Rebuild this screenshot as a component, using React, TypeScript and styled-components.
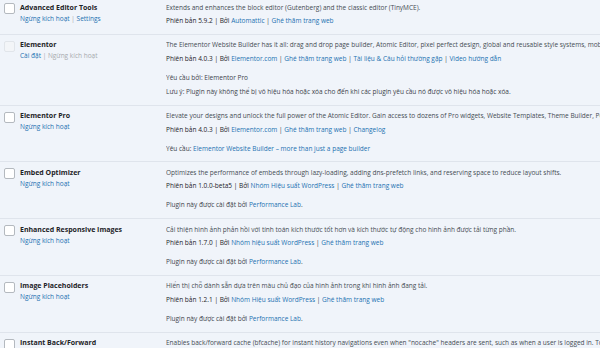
import React from "react";
import styled, { createGlobalStyle } from "styled-components";

// Style

const GlobalStyle = createGlobalStyle`
  html, body {
    margin: 0;
    padding: 0;
    background: #f0f4fa;
    overflow: hidden;
  }
  body {
    font-family: "Open Sans", "Noto Sans", sans-serif;
    font-size: 6.5px;
    color: #3c434a;
  }
`;

const Table = styled.div`
  width: 600px;
  margin-top: -3px;
  background: #f0f4fa;
`;

const Row = styled.div`
  display: grid;
  grid-template-columns: 20px 146px 1fr;
  padding: 5.5px 0 7.8px;
  border-bottom: 1px solid #dfe4ec;
`;

const CheckCell = styled.div`
  padding-left: 4px;
  padding-top: 0.5px;
`;

const Checkbox = styled.span<{ $disabled?: boolean }>`
  display: block;
  width: 9px;
  height: 9px;
  border: 1px solid ${(p) => (p.$disabled ? "#e1e5ea" : "#b4b9bf")};
  border-radius: 2px;
  background: ${(p) => (p.$disabled ? "#f3f5f8" : "#ffffff")};
`;

const NameCell = styled.div`
  display: flex;
  flex-direction: column;
`;

const Name = styled.strong`
  font-size: 7px;
  line-height: 10px;
  font-weight: 700;
  color: #1d2327;
  margin-bottom: 1px;
  white-space: nowrap;
`;

const Actions = styled.div`
  line-height: 10px;
  color: #a7aaad;
`;

const DescCell = styled.div`
  white-space: nowrap;
  overflow: hidden;
  line-height: 10px;
`;

const Desc = styled.p`
  margin: 0 0 3.5px;
  color: #454c53;
`;

const Meta = styled.div`
  color: #1d2327;
`;

const Note = styled.p<{ $first?: boolean }>`
  margin: ${(p) => (p.$first ? "9px" : "4px")} 0 0;
  color: #3c434a;
`;

const Link = styled.a`
  color: #2271b1;
  text-decoration: none;
`;

const Muted = styled.span`
  color: #a7aaad;
`;

const Sep = styled.span`
  color: #3c434a;
`;

// data

type Action = { label: string; off?: boolean };

type Plugin = {
  name: string;
  actions: Action[];
  desc: string;
  version: string;
  author: string;
  links: string[];
  notes?: React.ReactNode[];
  disabled?: boolean;
};

const installedBy = (
  <>
    Plugin này được cài đặt bởi <Link href="#">Performance Lab</Link>.
  </>
);

const plugins: Plugin[] = [
  {
    name: "Advanced Editor Tools",
    actions: [{ label: "Ngừng kích hoạt" }, { label: "Settings" }],
    desc: "Extends and enhances the block editor (Gutenberg) and the classic editor (TinyMCE).",
    version: "5.9.2",
    author: "Automattic",
    links: ["Ghé thăm trang web"],
  },
  {
    name: "Elementor",
    actions: [{ label: "Cài đặt" }, { label: "Ngừng kích hoạt", off: true }],
    disabled: true,
    desc: "The Elementor Website Builder has it all: drag and drop page builder, Atomic Editor, pixel perfect design, global and reusable style systems, mobile responsive editing, and more.",
    version: "4.0.3",
    author: "Elementor.com",
    links: ["Ghé thăm trang web", "Tài liệu & Câu hỏi thường gặp", "Video hướng dẫn"],
    notes: [
      <>Yêu cầu bởi: Elementor Pro</>,
      <>Lưu ý: Plugin này không thể bị vô hiệu hóa hoặc xóa cho đến khi các plugin yêu cầu nó được vô hiệu hóa hoặc xóa.</>,
    ],
  },
  {
    name: "Elementor Pro",
    actions: [{ label: "Ngừng kích hoạt" }],
    desc: "Elevate your designs and unlock the full power of the Atomic Editor. Gain access to dozens of Pro widgets, Website Templates, Theme Builder, Pop Ups, Forms and WooCommerce building capabilities.",
    version: "4.0.3",
    author: "Elementor.com",
    links: ["Ghé thăm trang web", "Changelog"],
    notes: [
      <>
        Yêu cầu: <Link href="#">Elementor Website Builder – more than just a page builder</Link>
      </>,
    ],
  },
  {
    name: "Embed Optimizer",
    actions: [{ label: "Ngừng kích hoạt" }],
    desc: "Optimizes the performance of embeds through lazy-loading, adding dns-prefetch links, and reserving space to reduce layout shifts.",
    version: "1.0.0-beta5",
    author: "Nhóm Hiệu suất WordPress",
    links: ["Ghé thăm trang web"],
    notes: [installedBy],
  },
  {
    name: "Enhanced Responsive Images",
    actions: [{ label: "Ngừng kích hoạt" }],
    desc: "Cải thiện hình ảnh phản hồi với tính toán kích thước tốt hơn và kích thước tự động cho hình ảnh được tải từng phần.",
    version: "1.7.0",
    author: "Nhóm hiệu suất WordPress",
    links: ["Ghé thăm trang web"],
    notes: [installedBy],
  },
  {
    name: "Image Placeholders",
    actions: [{ label: "Ngừng kích hoạt" }],
    desc: "Hiển thị chỗ dành sẵn dựa trên màu chủ đạo của hình ảnh trong khi hình ảnh đang tải.",
    version: "1.2.1",
    author: "Nhóm Hiệu suất WordPress",
    links: ["Ghé thăm trang web"],
    notes: [installedBy],
  },
  {
    name: "Instant Back/Forward",
    actions: [{ label: "Ngừng kích hoạt" }],
    desc: "Enables back/forward cache (bfcache) for instant history navigations even when \"nocache\" headers are sent, such as when a user is logged in. To see the plugin's effect, open the browser's DevTools.",
    version: "1.0.0",
    author: "Weston Ruter",
    links: ["Ghé thăm trang web"],
  },
];

// render

const PluginRow = ({ p }: { p: Plugin }) => (
  <Row>
    <CheckCell>
      <Checkbox $disabled={p.disabled} />
    </CheckCell>
    <NameCell>
      <Name>{p.name}</Name>
      <Actions>
        {p.actions.map((a, i) => (
          <React.Fragment key={a.label}>
            {i > 0 && " | "}
            {a.off ? <Muted>{a.label}</Muted> : <Link href="#">{a.label}</Link>}
          </React.Fragment>
        ))}
      </Actions>
    </NameCell>
    <DescCell>
      <Desc>{p.desc}</Desc>
      <Meta>
        Phiên bản {p.version} | Bởi <Link href="#">{p.author}</Link>
        {p.links.map((l) => (
          <React.Fragment key={l}>
            <Sep> | </Sep>
            <Link href="#">{l}</Link>
          </React.Fragment>
        ))}
      </Meta>
      {p.notes?.map((n, i) => (
        <Note key={i} $first={i === 0}>
          {n}
        </Note>
      ))}
    </DescCell>
  </Row>
);

export default function App() {
  return (
    <>
      <GlobalStyle />
      <Table>
        {plugins.map((p) => (
          <PluginRow key={p.name} p={p} />
        ))}
      </Table>
    </>
  );
}
